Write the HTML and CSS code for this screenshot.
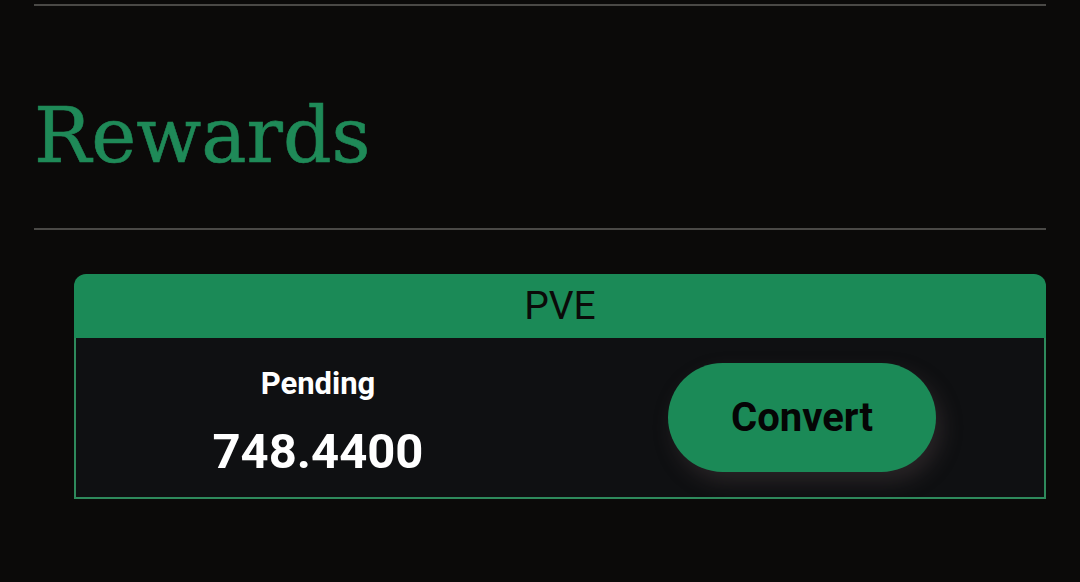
FILE: index.html
```html
<!DOCTYPE html>
<html lang="en">
<head>
    <meta charset="UTF-8">
    <meta name="viewport" content="width=device-width, initial-scale=1.0">
    <title>Rewards</title>
    <link rel="stylesheet" href="styles.css">
</head>
<body>

<hr class="rule top">
<h1 class="title">Rewards</h1>
<hr class="rule">

<div class="card">
    <div class="card-head">PVE</div>
    <div class="card-body">
        <div class="cell stat">
            <p class="label">Pending</p>
            <p class="amount">748.4400</p>
        </div>
        <div class="cell">
            <button class="convert">Convert</button>
        </div>
    </div>
</div>

</body>
</html>
```

FILE: styles.css
```css
body {
    margin: 0;
    padding: 0 34px;
    background-color: #0b0a09;
    color: white;
    font-family: Roboto, "Liberation Sans", sans-serif;
}
.rule {
    border: none;
    border-top: 2px solid #4a4946;
    margin: 0;
}
.rule.top {
    margin-top: 4px;
}
.title {
    font-family: "DejaVu Serif", serif;
    font-weight: normal;
    font-size: 76px;
    color: #1f8a58;
    -webkit-text-stroke: 0.6px #1f8a58;
    margin: 0;
    padding: 84px 0 47px 0;
    line-height: 1.2;
}
.card {
    margin: 44px 0 0 40px;
}
.card-head {
    background-color: #1b8a57;
    color: #0b0a09;
    border-radius: 12px 12px 0 0;
    text-align: center;
    font-size: 39px;
    height: 64px;
    line-height: 64px;
}
.card-body {
    display: grid;
    grid-template-columns: 1fr 1fr;
    background-color: #0f1012;
    border: 2px solid #2e8a5c;
    border-top: none;
    height: 159px;
}
.cell {
    display: flex;
    flex-direction: column;
    align-items: center;
    justify-content: center;
}
.stat {
    padding-top: 10px;
}
.label {
    margin: 0 0 21px;
    font-weight: bold;
    font-size: 31px;
}
.amount {
    margin: 0;
    font-weight: bold;
    font-size: 49px;
}
.convert {
    width: 268px;
    height: 109px;
    border: none;
    border-radius: 55px;
    background-color: #1b8a57;
    color: #050505;
    font-family: Roboto, "Liberation Sans", sans-serif;
    font-weight: bold;
    font-size: 40px;
    box-shadow: 6px 10px 20px rgba(70, 60, 62, 0.45);
}
```
